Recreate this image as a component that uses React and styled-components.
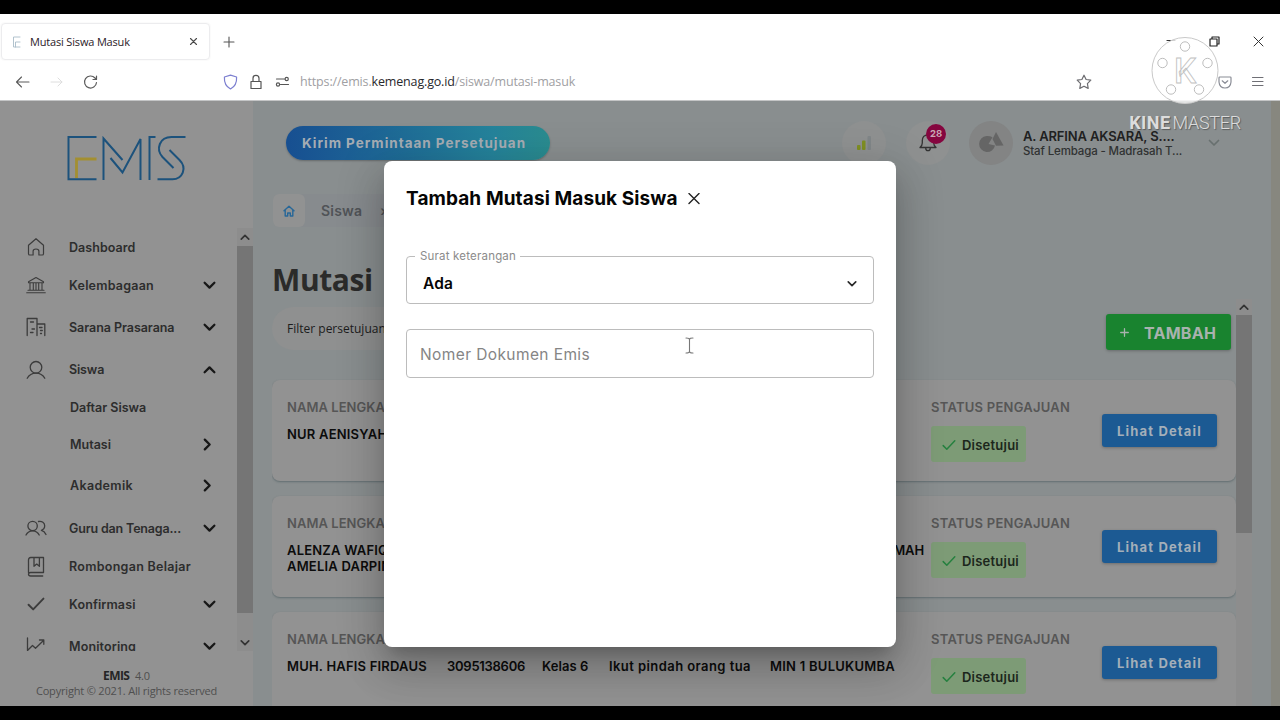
import React from 'react';
import styled, { createGlobalStyle, css } from 'styled-components';

const ui = '"Inter", sans-serif';
const sys = '"Open Sans", "Noto Sans", sans-serif';

const Global = createGlobalStyle`
  * { box-sizing: border-box; }
  html, body { margin: 0; padding: 0; background: #000; }
  body { width: 1280px; height: 720px; overflow: hidden; font-family: ${ui}; }
  svg { display: block; flex: none; }
`;

const Frame = styled.div`
  position: relative;
  width: 1280px;
  height: 720px;
  padding: 14px 0;
  background: #000;
  overflow: hidden;
`;
const Browser = styled.div`
  height: 692px;
  display: flex;
  flex-direction: column;
  background: #fff;
`;

/* browser chrome */
const TabBar = styled.div`
  height: 50px;
  padding: 9px 16px 0 1px;
  display: flex;
  align-items: flex-start;
`;
const Tab = styled.div`
  width: 209px;
  height: 37px;
  padding: 0 11px 0 10px;
  display: flex;
  align-items: center;
  border: 1px solid #ececee;
  border-radius: 4px;
  box-shadow: 0 0 2px #eee;
`;
const TabTitle = styled.span`
  flex: 1;
  margin-left: 8px;
  font: 400 11px/16px ${sys};
  letter-spacing: -0.17px;
  color: #2a2027;
`;
const NewTab = styled.div`
  height: 37px;
  margin-left: 13px;
  display: flex;
  align-items: center;
`;
const WindowButtons = styled.div`
  height: 36px;
  margin-left: auto;
  display: flex;
  align-items: center;
  gap: 33px;
`;
const NavBar = styled.div`
  height: 37px;
  padding: 0 16px 0 15px;
  display: flex;
  align-items: center;
  border-bottom: 1px solid #c4c5c6;
`;
const NavIcons = styled.div`
  display: flex;
  align-items: center;
  gap: 19px;
`;
const Address = styled.div`
  flex: 1;
  margin-left: 125px;
  display: flex;
  align-items: center;
`;
const Url = styled.span`
  margin-left: 10px;
  font: 400 12.5px/18px ${sys};
  letter-spacing: -0.16px;
  color: #a0a0a3;
  white-space: nowrap;
  b { font-weight: 400; color: #28282c; }
`;
const IconGap = styled.span`
  width: ${p => p.$w}px;
  flex: none;
`;

/* page */
const Page = styled.div`
  flex: 1;
  min-height: 0;
  display: flex;
  background: #898e8f;
`;
const EdgeStrip = styled.div`
  width: 9px;
  flex: none;
  background: #87877f;
`;
const Sidebar = styled.aside`
  width: 253px;
  flex: none;
  display: flex;
  flex-direction: column;
  background: #929292;
`;
const Logo = styled.div`
  height: 127px;
  padding: 33px 0 0 65px;
`;
const MenuArea = styled.div`
  height: 423px;
  display: flex;
  overflow: hidden;
`;
const Menu = styled.nav`
  flex: 1;
  min-width: 0;
`;
const MenuItem = styled.div`
  height: ${p => p.$h}px;
  padding: 0 ${p => (p.$sub ? 23 : 21)}px 0 ${p => (p.$sub ? 70 : 25)}px;
  display: flex;
  align-items: center;
  color: #2d2d2d;
`;
const MenuIcon = styled.span`
  width: 22px;
  margin-right: 22px;
  display: flex;
  justify-content: center;
  color: #3c3c3c;
`;
const MenuLabel = styled.span`
  flex: 1;
  padding-top: 1px;
  white-space: nowrap;
  font: 600 12.5px/20px ${ui};
  letter-spacing: ${p => p.$ls}px;
`;
const Scroll = styled.div`
  width: 16px;
  flex: none;
  display: flex;
  flex-direction: column;
  background: #8d8d8d;
`;
const ScrollArrow = styled.div`
  height: ${p => p.$h || 17}px;
  display: flex;
  align-items: center;
  justify-content: center;
`;
const ScrollThumb = styled.div`
  height: ${p => p.$h}px;
  margin-bottom: auto;
  background: #757575;
`;
const Footer = styled.footer`
  padding-top: 17px;
  text-align: center;
  font: 400 11px/15px ${sys};
  letter-spacing: -0.18px;
  color: #4f4f4f;
  b { font-size: 12px; letter-spacing: -0.6px; color: #252525; margin-right: 3px; }
`;

const Main = styled.main`
  flex: 1;
  min-width: 0;
  padding-left: 19px;
  display: flex;
  flex-direction: column;
`;
const Header = styled.header`
  height: 64px;
  padding: 20px 51px 0 14px;
  display: flex;
  align-items: center;
`;
const RequestButton = styled.button`
  width: 264px;
  height: 34px;
  margin: 0 auto 0 0;
  padding: 0 0 0 16px;
  border: 0;
  border-radius: 17px;
  text-align: left;
  background: linear-gradient(90deg, #174f91, #25839b 78%, #2a8c8f);
  box-shadow: 0 1px 2px rgba(0, 0, 0, 0.25);
  color: #a5acb3;
  font: 700 13.5px/34px ${ui};
  letter-spacing: 0.98px;
`;
const Round = styled.div`
  position: relative;
  width: 44px;
  height: 44px;
  margin-right: ${p => p.$mr}px;
  border-radius: 50%;
  display: flex;
  align-items: center;
  justify-content: center;
  background: ${p => p.$bg || '#8f9191'};
`;
const Count = styled.span`
  position: absolute;
  left: 20px;
  top: 3px;
  width: 20px;
  height: 20px;
  border-radius: 50%;
  text-align: center;
  background: #85063f;
  color: #c9a7b5;
  font: 700 9.5px/20px ${ui};
`;
const User = styled.div`
  width: 185px;
  padding-top: 1px;
  white-space: nowrap;
  color: #303232;
`;
const UserName = styled.div`
  font: 600 13px/15px ${ui};
  letter-spacing: -0.14px;
  color: #1f2121;
`;
const UserRole = styled.div`
  font: 500 11.5px/15px ${ui};
  letter-spacing: -0.14px;
`;
const Crumbs = styled.div`
  width: 210px;
  height: 33px;
  margin-top: 29px;
  margin-left: 1px;
  display: flex;
  align-items: center;
  border-radius: 6px;
  background: #878b8e;
  color: #505357;
  font: 600 14px/20px ${ui};
  letter-spacing: 0.2px;
`;
const HomeTile = styled.span`
  width: 32px;
  height: 33px;
  margin-right: 16px;
  border-radius: 6px;
  display: flex;
  align-items: center;
  justify-content: center;
  background: #919292;
`;
const CrumbArrow = styled.span`
  margin-left: 18px;
`;
const Title = styled.h1`
  height: 72px;
  margin: 0;
  padding: 34px 0 0;
  font: 700 30px/38px ${sys};
  letter-spacing: -0.4px;
  color: #2b2b2a;
`;
const Results = styled.div`
  flex: 1;
  min-height: 0;
  display: flex;
  padding-right: 19px;
`;
const List = styled.div`
  flex: 1;
  min-width: 0;
  overflow: hidden;
`;
const Toolbar = styled.div`
  padding: 8px 5px 0 0;
  height: 51px;
  display: flex;
  justify-content: space-between;
  align-items: flex-end;
`;
const Filter = styled.div`
  width: 320px;
  height: 43px;
  padding-left: 15px;
  border-radius: 22px;
  background: #8f9090;
  color: #1c1c1c;
  font: 400 12px/43px ${sys};
`;
const buttonBase = css`
  border: 0;
  border-radius: 3px;
  box-shadow: 0 1px 3px rgba(0, 0, 0, 0.25);
  color: #a9b2ae;
  font-family: ${ui};
  font-weight: 700;
`;
const AddButton = styled.button`
  ${buttonBase}
  width: 125px;
  height: 36px;
  padding: 1px 0 0 14px;
  display: flex;
  align-items: center;
  gap: 15px;
  background: #19832f;
  font-size: 16px;
  letter-spacing: 0.25px;
`;
const Card = styled.article`
  height: 101px;
  margin: ${p => p.$first ? 30 : 15}px 0 0;
  padding: 17px 0 0 15px;
  display: grid;
  grid-template-columns: 160px 95px 67px 161px 161px 171px 115px;
  border-radius: 8px;
  background: #929292;
  box-shadow: 0 1px 2px rgba(50, 70, 75, 0.45);
`;
const Column = styled.div`
  min-width: 0;
  color: #0c0c0c;
  font: 600 13px/16px ${ui};
  letter-spacing: ${p => p.$ls ?? 0.2}px;
  white-space: nowrap;
  text-align: ${p => p.$align || 'left'};
  padding-right: ${p => (p.$align ? 7 : 0)}px;
`;
const Label = styled.div`
  height: 20px;
  margin-bottom: 9px;
  color: #565656;
  font: 600 13px/20px ${ui};
  letter-spacing: ${p => p.$ls ?? 0.05}px;
`;
const Status = styled.div`
  width: 95px;
  height: 36px;
  padding: 1px 0 0 11px;
  border-radius: 3px;
  display: flex;
  align-items: center;
  gap: 6px;
  background: #7d9b76;
  color: #1c261c;
  font: 600 13px/20px ${ui};
  letter-spacing: 0.23px;
`;
const DetailButton = styled.button`
  ${buttonBase}
  width: 115px;
  height: 33px;
  margin-top: 17px;
  padding: 0;
  background: #1c5a93;
  color: #a4afb9;
  font-size: 13px;
  letter-spacing: 1.17px;
`;

/* dialog */
const Dialog = styled.section`
  position: absolute;
  left: 384px;
  top: 161px;
  width: 512px;
  height: 486px;
  padding: 22px;
  border-radius: 8px;
  background: #fff;
  box-shadow: 0 11px 15px -7px rgba(0, 0, 0, 0.2), 0 24px 38px 3px rgba(0, 0, 0, 0.14), 0 9px 46px 8px rgba(0, 0, 0, 0.12);
`;
const DialogHead = styled.div`
  height: 32px;
  margin-bottom: 35px;
  display: flex;
  align-items: center;
  gap: 10px;
`;
const DialogTitle = styled.h2`
  margin: 0;
  font: 700 19px/30px ${ui};
  letter-spacing: 0.1px;
  color: #050505;
`;
const Select = styled.fieldset`
  height: 54px;
  margin: 0 0 25px;
  padding: 2px 16px 0;
  display: flex;
  align-items: center;
  justify-content: space-between;
  border: 1px solid #bcbcbc;
  border-radius: 4px;
  color: #050505;
  font: 600 15.5px/20px ${ui};
  letter-spacing: 0.15px;
  legend {
    margin-left: -8px;
    padding: 0 4px 0 5px;
    color: #8b8b8b;
    font: 400 11.5px/13px ${ui};
    letter-spacing: 0.19px;
  }
`;
const Input = styled.div`
  height: 49px;
  padding-left: 13px;
  border: 1px solid #bcbcbc;
  border-radius: 4px;
  color: #858585;
  font: 400 15.5px/49px ${ui};
  letter-spacing: 0.4px;
`;
const Cursor = styled.div`
  position: absolute;
  left: 301px;
  top: 176px;
`;

/* recorder watermark */
const Watermark = styled.div`
  position: absolute;
  left: 1127px;
  top: 36px;
  width: 116px;
  display: flex;
  flex-direction: column;
  align-items: center;
`;
const Brand = styled.div`
  margin-top: 7px;
  white-space: nowrap;
  color: #dcdcdc;
  text-shadow: 1px 1px 1px rgba(0, 0, 0, 0.35);
  font: 300 18px/20px "Roboto", sans-serif;
  letter-spacing: -0.3px;
  b { font-weight: 700; letter-spacing: 0.45px; margin-right: 2px; }
`;

const Svg = ({ w = 20, h = w, box, sw = 1.4, color = 'currentColor', children }) => (
  <svg width={w} height={h} viewBox={box || `0 0 ${w} ${h}`} fill="none" stroke={color}
    strokeWidth={sw} strokeLinecap="round" strokeLinejoin="round">{children}</svg>
);
const Chevron = ({ dir = 'down', w = 12, sw = 2.2, color = '#171717' }) => {
  const d = { down: 'M1.5 3.5 6 8l4.5-4.5', up: 'M1.5 8.5 6 4l4.5 4.5', right: 'M3.5 1.5 8 6l-4.5 4.5' }[dir];
  return <Svg w={w} box="0 0 12 12" sw={sw} color={color}><path d={d} /></Svg>;
};
const Check = ({ w = 14, color, sw = 1.7 }) => (
  <Svg w={w} box="0 0 14 14" sw={sw} color={color}><path d="M1.2 7.6 4.8 11.2 12.8 2.8" /></Svg>
);

const menuIcons = {
  home: <Svg w={20} sw={1.2}><path d="M2.5 8.2 10 1.7l7.5 6.5v8.6q0 1.2-1.2 1.2h-3.4v-3.8q0-2.2-2.9-2.2t-2.9 2.2V18H3.7q-1.2 0-1.2-1.2z" /></Svg>,
  bank: <Svg w={20} h={18} sw={1.1}><path d="M2.5 5.8 10 1.5l7.5 4.3v1h-15zM4 7v7M7.3 7v7M10 7v7M12.7 7v7M16 7v7M2 14.3h16M.7 16.8h18.6" /></Svg>,
  building: <Svg w={20} sw={1.3}><path d="M1.2 18.5V1.5h9.8v17M11 7h7.8v11.5M4.5 5h3M6 12h2.5M4.5 15.5H7M13.5 10.5h2.5M14.5 13.5h1.8M14.5 16.5h1" /></Svg>,
  user: <Svg w={20} sw={1.3}><circle cx="10" cy="7.3" r="5.8" /><path d="M1.2 18.3c2.2-4 5-5.2 8.8-5.2s6.6 1.2 8.8 5.2" /></Svg>,
  users: <Svg w={22} h={16} sw={1.3}><circle cx="7.6" cy="6" r="4.7" /><path d="M1 15c1.5-3 3.8-4.2 6.6-4.2s5.1 1.2 6.6 4.2M13.5 1.5c3.5-.7 6.2 1.3 6.2 4.2 0 2.2-1.4 3.9-3.3 4.6 2.2.6 3.6 2 4.6 4.2" /></Svg>,
  book: <Svg w={18} h={21} sw={1.3}><path d="M16.5 1.5H3.8Q1.5 1.5 1.5 4v12.5M16.5 1.5v15H3.7q-2.2.1-2.2 1.8T3.7 20h12M7 1.8v8.5l2.7-2.2 2.7 2.2V1.8" /></Svg>,
  check: <Check w={18} sw={1.5} />,
  chart: <Svg w={20} h={20} sw={1.3}><path d="M1.5 2v12.5l5-5 3 2.7 8-7.7M13.5 4h4.3v4.3" /></Svg>,
};

const menu = [
  ['Dashboard', 38, 'home', null, 0.06],
  ['Kelembagaan', 38, 'bank', 'down', 0.22],
  ['Sarana Prasarana', 46, 'building', 'down', -0.05],
  ['Siswa', 39, 'user', 'up', -0.15],
  ['Daftar Siswa', 36, null, null, 0],
  ['Mutasi', 38, null, 'right', 0],
  ['Akademik', 45, null, 'right', 0.35],
  ['Guru dan Tenaga...', 40, 'users', 'down', -0.17],
  ['Rombongan Belajar', 36, 'book', null, 0.28],
  ['Konfirmasi', 40, 'check', 'down', 0.11],
  ['Monitoring', 44, 'chart', 'down', 0.12],
];

const rows = [
  { name: ['NUR AENISYAH'] },
  { name: ['ALENZA WAFIQ', 'AMELIA DARPIN'], school: 'MAH', align: 'right' },
  { name: ['MUH. HAFIS FIRDAUS'], nisn: '3095138606', grade: 'Kelas 6', reason: 'Ikut pindah orang tua', school: 'MIN 1 BULUKUMBA' },
];

const Student = ({ row, first }) => (
  <Card $first={first}>
    <Column><Label>NAMA LENGKAP</Label>{row.name.map(n => <div key={n}>{n}</div>)}</Column>
    <Column $ls={-0.26}><Label />{row.nisn}</Column>
    <Column $ls={0.08}><Label />{row.grade}</Column>
    <Column $ls={0.43}><Label />{row.reason}</Column>
    <Column $align={row.align} $ls={row.align ? -0.1 : 0.25}><Label />{row.school}</Column>
    <div>
      <Label $ls={0.24}>STATUS PENGAJUAN</Label>
      <Status><Check color="#26813f" w={14} sw={1.5} />Disetujui</Status>
    </div>
    <DetailButton>Lihat Detail</DetailButton>
  </Card>
);

const EmisLogo = () => (
  <svg width="123" height="48" viewBox="0 0 122 48" fill="none" strokeWidth="2">
    <g stroke="#1c527c">
      <path d="M31 3H3v42.3h28" />
      <path d="M38 46V4.5L57 26M45 24l12 14.5L75 5v41" />
      <path d="M90 3h-6v43" />
      <path d="M120 3h-14c-12 0-16 12-9 20l11 11" />
      <path d="M104 16l10 10c8 8 3 19.3-7 19.3H92" />
    </g>
    <path stroke="#a38f31" strokeWidth="2.8" d="M11 44V25h20" />
  </svg>
);

export default function App() {
  return (
    <Frame>
      <Global />
      <Browser>
        <TabBar>
          <Tab>
            <Svg w={10} h={14} sw={0.9} color="#a9bcc8"><path d="M8 2H1.5v10H8M3.5 12V7H8" /></Svg>
            <TabTitle>Mutasi Siswa Masuk</TabTitle>
            <Svg w={9} sw={1.1} color="#4a4a4a"><path d="M1.5 1.5l6 6M7.5 1.5l-6 6" /></Svg>
          </Tab>
          <NewTab><Svg w={12} sw={1.1} color="#555"><path d="M6 1v10M1 6h10" /></Svg></NewTab>
          <WindowButtons>
            <Svg w={10} sw={1.2} color="#333"><path d="M1 4.5h8" /></Svg>
            <Svg w={11} sw={1.2} color="#222"><path d="M1 3h7v7H1zM3 3V1h7v7H8" /></Svg>
            <Svg w={11} sw={1} color="#333"><path d="M1 1l9 9M10 1l-9 9" /></Svg>
          </WindowButtons>
        </TabBar>
        <NavBar>
          <NavIcons>
            <Svg w={15} sw={1.1} color="#5b5b5b"><path d="M14 7H1.5M6.5 2l-5 5 5 5" /></Svg>
            <Svg w={15} sw={1} color="#dedede"><path d="M2 7h11M9 3l4 4-4 4" /></Svg>
            <Svg w={15} sw={1.2} color="#5b5b5b"><path d="M13.5 7.5A6 6 0 1 1 12 3l1 1.200M13.5 1v3.500h-3.500" /></Svg>
          </NavIcons>
          <Address>
            <Svg w={15} h={16} sw={1.2} color="#7c7fd0"><path d="M7.5 1.2 13.6 3q.5 8.500-6.100 12Q.9 11.500 1.400 3z" /></Svg>
            <IconGap $w={12} />
            <Svg w={12} h={16} sw={1.2} color="#555"><path d="M1 7.500h10v7H1zM3 7.500V4.200Q3 1.300 6 1.300t3 2.900v3.300" /></Svg>
            <IconGap $w={13} />
            <Svg w={15} h={12} sw={1.2} color="#555"><path d="M1.500 3h8M5.500 8.500h8" /><circle cx="11.7" cy="3" r="1.6" /><circle cx="3" cy="8.5" r="1.6" /></Svg>
            <Url>https://emis.<b>kemenag.go.id</b>/siswa/mutasi-masuk</Url>
          </Address>
          <Svg w={16} sw={1.2} color="#6c6c70"><path d="M8 1.200l2.100 4.300 4.700.7-3.400 3.400.8 4.800L8 12.200l-4.200 2.200.8-4.800L1.200 6.200l4.700-.7z" /></Svg>
          <IconGap $w={126} />
          <Svg w={14} h={13} sw={1.2} color="#8a8d96"><path d="M1.800 1h10.400q.8 0 .8.800V6q-.5 6-6 6T1 6V1.800Q1 1 1.800 1zM4.200 4.800 7 7.300l2.800-2.500" /></Svg>
          <IconGap $w={20} />
          <Svg w={12} h={12} sw={1.1} color="#6f6f75"><path d="M.5 1.500h10.500M.5 5.500h10.500M.5 9.500h10.500" /></Svg>
        </NavBar>
        <Page>
          <Sidebar>
            <Logo><EmisLogo /></Logo>
            <MenuArea>
              <Menu>
                {menu.map(([label, h, icon, dir, ls]) => (
                  <MenuItem key={label} $h={h} $sub={!icon}>
                    {icon && <MenuIcon>{menuIcons[icon]}</MenuIcon>}
                    <MenuLabel $ls={ls}>{label}</MenuLabel>
                    {dir && <Chevron dir={dir} w={13} sw={2.1} />}
                  </MenuItem>
                ))}
              </Menu>
              <Scroll>
                <ScrollArrow $h={18}><Chevron dir="up" w={10} color="#333" sw={2} /></ScrollArrow>
                <ScrollThumb $h={367} />
                <ScrollArrow><Chevron w={10} color="#333" sw={2} /></ScrollArrow>
              </Scroll>
            </MenuArea>
            <Footer>
              <div><b>EMIS</b> 4.0</div>
              <div>Copyright © 2021. All rights reserved</div>
            </Footer>
          </Sidebar>
          <Main>
            <Header>
              <RequestButton>Kirim Permintaan Persetujuan</RequestButton>
              <Round $mr={20}>
                <svg width="16" height="16" viewBox="0 0 16 16">
                  <rect x="1" y="10" width="3.5" height="5" rx="1" fill="#7f8f22" />
                  <rect x="6" y="5.5" width="3.5" height="9.5" rx="1" fill="#7f8f22" />
                  <rect x="11.5" y="1" width="3.5" height="14" rx="1" fill="#808688" />
                </svg>
              </Round>
              <Round $mr={19}>
                <Svg w={20} sw={1.3} color="#333"><path d="M2 14.500h16q-2.300-2-2.300-4.500V7.500Q15.700 2 10 1.800 4.300 2 4.300 7.500V10q0 2.500-2.300 4.500zM7.700 15q0 2.700 2.300 2.700t2.300-2.700" /></Svg>
                <Count>28</Count>
              </Round>
              <Round $mr={10} $bg="#838484">
                <svg width="26" height="22" viewBox="0 0 26 22" fill="#656565">
                  <path d="M8.5 4a8 8 0 1 0 8.500 9.500L10.500 12l4-6.800Q12 3.800 8.500 4z" />
                  <path d="M18 0l7.500 13.500-7.500.3L14.500 7z" />
                </svg>
              </Round>
              <User>
                <UserName>A. ARFINA AKSARA, S....</UserName>
                <UserRole>Staf Lembaga - Madrasah T...</UserRole>
              </User>
              <Chevron color="#68706f" sw={1.7} w={12} />
            </Header>
            <Crumbs>
              <HomeTile>
                <Svg w={12} sw={1.4} color="#276798"><path d="M1 5.800 6 1.300l5 4.500M2.200 5v6h2.500V8h2.600v3h2.500V5" /></Svg>
              </HomeTile>
              Siswa
              <CrumbArrow>›</CrumbArrow>
            </Crumbs>
            <Title>Mutasi</Title>
            <Results>
              <List>
                <Toolbar>
                  <Filter>Filter persetujuan</Filter>
                  <AddButton>
                    <Svg w={9} sw={1.3}><path d="M4.500.7v7.600M.7 4.500h7.600" /></Svg>
                    TAMBAH
                  </AddButton>
                </Toolbar>
                {rows.map((row, i) => <Student key={row.name[0]} row={row} first={i === 0} />)}
              </List>
              <Scroll>
                <ScrollArrow $h={16}><Chevron dir="up" w={10} color="#333" sw={2} /></ScrollArrow>
                <ScrollThumb $h={218} />
              </Scroll>
            </Results>
          </Main>
          <EdgeStrip />
        </Page>
      </Browser>

      <Dialog>
        <DialogHead>
          <DialogTitle>Tambah Mutasi Masuk Siswa</DialogTitle>
          <Svg w={12} sw={1.4} color="#222"><path d="M1 .5l10 10M11 .5l-10 10" /></Svg>
        </DialogHead>
        <Select>
          <legend>Surat keterangan</legend>
          Ada
          <Chevron w={10} sw={2} color="#2a2a2a" />
        </Select>
        <Input>Nomer Dokumen Emis</Input>
        <Cursor>
          <Svg w={9} h={17} sw={1.1} color="#777"><path d="M1 1q3.500 0 3.500 1.500v12Q4.500 16 1 16M8 1Q4.500 1 4.500 2.500M8 16q-3.500 0-3.500-1.500" /></Svg>
        </Cursor>
      </Dialog>

      <Watermark>
        <svg width="70" height="70" viewBox="0 0 70 70">
          <circle cx="35" cy="34.5" r="33" fill="#fff" fillOpacity="0.78" stroke="#c9c9c9" />
          <g fill="#fff" stroke="#bdbdbd">
            <circle cx="35" cy="10.5" r="4.7" />
            <circle cx="12.5" cy="27" r="4.7" />
            <circle cx="57.5" cy="27" r="4.7" />
            <circle cx="21" cy="53.5" r="4.7" />
            <circle cx="49" cy="53.5" r="4.7" />
          </g>
          <text x="35" y="47" textAnchor="middle" fontFamily="Roboto, sans-serif" fontWeight="500" fontSize="35" fill="#fff" stroke="#c2c2c2" strokeWidth="0.9">K</text>
        </svg>
        <Brand><b>KINE</b>MASTER</Brand>
      </Watermark>
    </Frame>
  );
}
